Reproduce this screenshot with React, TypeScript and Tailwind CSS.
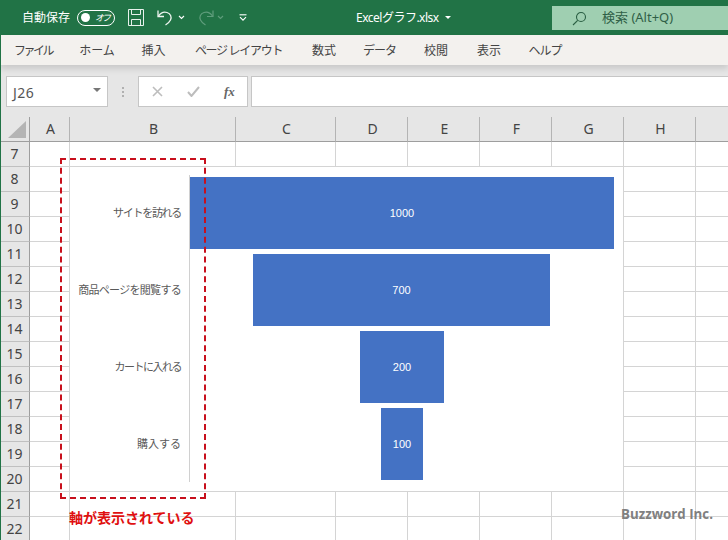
const colWidths = [
  ["A", "w-[40px]"],
  ["B", "w-[166px]"],
  ["C", "w-[100px]"],
  ["D", "w-[72px]"],
  ["E", "w-[72px]"],
  ["F", "w-[72px]"],
  ["G", "w-[72px]"],
  ["H", "w-[72px]"],
  ["", "w-[40px]"],
];
const rows = [7, 8, 9, 10, 11, 12, 13, 14, 15, 16, 17, 18, 19, 20, 21, 22];
const tabs: [string, string][] = [
  ["ファイル", "w-[64px] tracking-[-2.5px]"],
  ["ホーム", "w-[64px]"],
  ["挿入", "w-[49px]"],
  ["ページ レイアウト", "w-[121px] tracking-[-1.3px]"],
  ["数式", "w-[50px]"],
  ["データ", "w-[61px] tracking-[-1px]"],
  ["校閲", "w-[52px]"],
  ["表示", "w-[54px]"],
  ["ヘルプ", "w-[58px] tracking-[-1px]"],
];
const bars = [
  { label: "サイトを訪れる", value: 1000, width: "w-[424px]", row: "", track: "tracking-[-1.3px]" },
  { label: "商品ページを閲覧する", value: 700, width: "w-[297px]", row: "pr-[1px]", track: "tracking-[-0.7px]" },
  { label: "カートに入れる", value: 200, width: "w-[84px]", row: "", track: "tracking-[-1.5px]" },
  { label: "購入する", value: 100, width: "w-[42px]", row: "", track: "" },
];

function TitleBar() {
  return (
    <div className="h-[35px] bg-[#217346] flex items-center text-[#fff] shrink-0">
      <span className="ml-[22px] text-[12px] w-[48px] whitespace-nowrap">自動保存</span>
      <div className="ml-[7px] w-[38px] h-[16px] rounded-full border border-white flex items-center justify-between pl-[3px] pr-[3px]">
        <span className="w-[9px] h-[9px] rounded-full bg-white" />
        <span className="text-[9px] italic tracking-[-2px] mr-[2px] leading-none">オフ</span>
      </div>
      <svg className="ml-[13px]" width="16" height="17" viewBox="0 0 16 17" fill="none" stroke="#e8f1ec" strokeWidth="1">
        <path d="M.5.5h15v16H.5z" />
        <path d="M3.500.5v5h9v-5M3.500 16.500v-6h9v6" />
      </svg>
      <svg className="ml-[13px]" width="16" height="17" viewBox="0 0 16 17" fill="none" stroke="#eef5f0" strokeWidth="1.3">
        <path d="M1 1.500v6h6" />
        <path d="M1.500 7C4 3.500 7 2.500 10 3.500c3.500 1.200 5 4.500 3.500 7.500-1 2-2.500 3.500-5 5" />
      </svg>
      <svg className="ml-[5px]" width="7" height="5" viewBox="0 0 7 5" fill="none" stroke="#fff" strokeWidth="1.1">
        <path d="M1 1l2.500 2.500L6 1" />
      </svg>
      <svg className="ml-[13px]" width="16" height="17" viewBox="0 0 16 17" fill="none" stroke="#5f9d7c" strokeWidth="1.2">
        <path d="M15 1.500v6H9" />
        <path d="M14.500 7C12 3.500 9 2.500 6 3.500 2.500 4.700 1 8 2.500 11c1 2 2.500 3.500 5 5" />
      </svg>
      <svg className="ml-[3px]" width="7" height="5" viewBox="0 0 7 5" fill="none" stroke="#5f9d7c" strokeWidth="1.1">
        <path d="M1 1l2.500 2.500L6 1" />
      </svg>
      <svg className="ml-[15px]" width="8" height="7" viewBox="0 0 8 7" fill="none" stroke="#fff" strokeWidth="1.1">
        <path d="M.5.800h7" />
        <path d="M1 3.200l3 3 3-3" />
      </svg>
      <span className="ml-[109px] text-[12px] tracking-[-0.5px] whitespace-nowrap w-[85px]">Excelグラフ.xlsx</span>
      <span className="ml-[4px] w-0 h-0 border-l-[3px] border-r-[3px] border-t-[3px] border-l-transparent border-r-transparent border-t-white" />
      <div className="ml-[101px] w-[176px] h-[24px] mt-[1px] bg-[#9fcfb1] flex items-center text-[13px] shrink-0">
        <svg className="ml-[20px]" width="15" height="15" viewBox="0 0 15 15" fill="none" stroke="#2a5f43" strokeWidth="1.1">
          <circle cx="9" cy="6" r="4.500" />
          <path d="M5.700 9.300L1 14" />
        </svg>
        <span className="ml-[15px] whitespace-nowrap text-[#2f5f47]">検索 (Alt+Q)</span>
      </div>
    </div>
  );
}

function RibbonTabs() {
  return (
    <div className="h-[30px] bg-[#f3f1ee] flex pl-[1px] pt-[1px] text-[#444] text-[12px] shrink-0 shadow-[0_4px_6px_rgba(0,0,0,0.12)] relative z-10">
      {tabs.map(([name, w]) => (
        <div key={name} className={`${w} flex items-center justify-center whitespace-nowrap`}>
          {name}
        </div>
      ))}
    </div>
  );
}

function FormulaBar() {
  return (
    <div className="h-[52px] bg-[#e6e6e6] flex pt-[11px] shrink-0">
      <div className="ml-[6px] w-[102px] h-[31px] bg-white border border-[#c6c6c6] flex items-center justify-between pl-[6px] pr-[6px] text-[#555] text-[14px]">
        <span className="pt-[2px] tracking-[0.5px]">J26</span>
        <span className="w-0 h-0 border-l-[4px] border-r-[4px] border-t-[4px] border-l-transparent border-r-transparent border-t-[#777] mb-[3px]" />
      </div>
      <div className="w-[30px] h-[31px] flex flex-col items-center justify-center gap-[2px]">
        <span className="w-[2px] h-[2px] bg-[#b0b0b0]" />
        <span className="w-[2px] h-[2px] bg-[#b0b0b0]" />
        <span className="w-[2px] h-[2px] bg-[#b0b0b0]" />
      </div>
      <div className="w-[110px] h-[31px] bg-white border border-[#c6c6c6] flex items-center">
        <svg className="ml-[13px]" width="11" height="11" viewBox="0 0 11 11" fill="none" stroke="#bdbdbd" strokeWidth="1.6">
          <path d="M1 1l9 9M10 1l-9 9" />
        </svg>
        <svg className="ml-[24px]" width="13" height="11" viewBox="0 0 13 11" fill="none" stroke="#bdbdbd" strokeWidth="2">
          <path d="M1 6l3.500 4L12 1" />
        </svg>
        <span className="ml-[24px] text-[13px] font-bold italic text-[#666] font-['Liberation_Serif',serif]">fx</span>
      </div>
      <div className="ml-[3px] flex-1 h-[31px] bg-white border-y border-l border-[#c6c6c6]" />
    </div>
  );
}

function Corner() {
  return (
    <div className="w-[30px] h-[25px] bg-[#e6e6e6] border-r border-b border-[#9e9e9e] flex items-end justify-end pr-[3px] pb-[3px] shrink-0">
      <svg width="18" height="17" viewBox="0 0 18 17">
        <path d="M18 0v17H0z" fill="#b4b4b4" />
      </svg>
    </div>
  );
}

function Sheet() {
  return (
    <div className="relative flex-1 overflow-hidden bg-white">
      <div className="flex h-[25px]">
        <Corner />
        {colWidths.map(([c, w], i) => (
          <div key={i} className={`${w} shrink-0 h-[25px] bg-[#e6e6e6] border-b border-b-[#9e9e9e] border-r border-r-[#b4b4b4] flex items-center justify-center pl-[2px] pb-[2px] text-[14px] text-[#444]`}>
            {c}
          </div>
        ))}
      </div>
      {rows.map((r) => (
        <div key={r} className="flex h-[25px]">
          <div className="w-[30px] shrink-0 bg-[#e6e6e6] border-r border-r-[#9e9e9e] border-b border-b-[#c0c0c0] flex items-center justify-center pb-[2px] text-[14px] text-[#444]">
            {r}
          </div>
          {colWidths.map(([, w], i) => (
            <div key={i} className={`${w} shrink-0 border-r border-b border-[#d4d4d4]`} />
          ))}
        </div>
      ))}
      <Chart />
      <div className="absolute left-[60px] top-[41px] w-[146px] h-[341px] border-2 border-dashed border-[#c8101c]" />
      <div className="absolute left-[69px] top-[390px] text-[14px] font-bold text-[#e01010] whitespace-nowrap">軸が表示されている</div>
      <div className="absolute left-[621px] top-[388px] text-[13.3px] font-bold text-[#808080] font-['Open_Sans',sans-serif] whitespace-nowrap">Buzzword Inc.</div>
    </div>
  );
}

function Chart() {
  return (
    <div className="absolute left-[70px] top-[50px] w-[553px] h-[324px] bg-white flex pt-[10px] pl-[1px]">
      <div className="flex flex-col gap-[5px] w-[118px] shrink-0">
        {bars.map((b) => (
          <div key={b.label} className={`${b.track} h-[72px] flex items-center justify-end pr-[8px] pt-[1px] text-[11px] text-[#595959] whitespace-nowrap`}>
            {b.label}
          </div>
        ))}
      </div>
      <div className="w-[1px] h-[307px] -mt-[2px] bg-[#d0d0d0] shrink-0" />
      <div className="flex flex-col gap-[5px] w-[424px] shrink-0">
        {bars.map((b) => (
          <div key={b.value} className={`${b.row} h-[72px] flex justify-center`}>
            <div className={`${b.width} h-[72px] bg-[#4472c4] flex items-center justify-center text-white text-[11px] font-['Liberation_Sans',sans-serif]`}>
              {b.value}
            </div>
          </div>
        ))}
      </div>
    </div>
  );
}

export default function App() {
  return (
    <div className="relative w-[728px] h-[540px] overflow-hidden flex flex-col bg-white font-['Noto_Sans','Noto_Sans_CJK_JP',sans-serif]">
      <TitleBar />
      <RibbonTabs />
      <FormulaBar />
      <Sheet />
      <div className="absolute left-0 top-0 w-[1px] h-full bg-[#217346] z-20" />
    </div>
  );
}
